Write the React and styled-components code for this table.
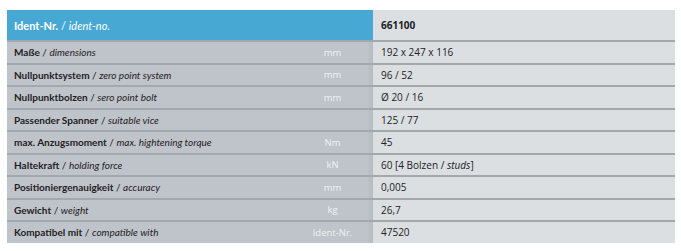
import React from 'react'
import styled, { createGlobalStyle } from 'styled-components'

const GlobalStyle = createGlobalStyle`
  body {
    margin: 0;
    background: #ffffff;
  }
`

const Table = styled.div`
  width: 668px;
  margin: 10px 0 0 7px;
  display: flex;
  flex-direction: column;
`

const Row = styled.div`
  display: grid;
  grid-template-columns: 285px 81px 302px;
  height: ${({ $head }) => ($head ? '30px' : '20.5px')};
  border-top: ${({ $head }) => ($head ? 'none' : '2px solid #a3a8ad')};
`

const Label = styled.div`
  display: flex;
  align-items: center;
  padding-left: 7px;
  background: ${({ $head }) => ($head ? '#47a8d4' : '#bfc4ca')};
  color: ${({ $head }) => ($head ? '#ffffff' : '#1f2023')};
  font-family: Lato, 'Liberation Sans', sans-serif;
  font-size: ${({ $head }) => ($head ? '11px' : '10px')};
  white-space: nowrap;

  b {
    font-weight: 700;
  }
  i {
    font-weight: 400;
    font-style: italic;
  }
`

const Unit = styled.div`
  display: flex;
  align-items: center;
  justify-content: center;
  background: ${({ $head }) =>
    $head
      ? '#47a8d4'
      : 'linear-gradient(to right, #bfc4ca calc(100% - 6px), #b6bbc1)'};
  color: #eff1f3;
  font-family: 'Open Sans', 'Liberation Sans', sans-serif;
  font-size: 9.5px;
`

const Value = styled.div`
  display: flex;
  align-items: center;
  padding-left: 8px;
  background: #dcdfe1;
  color: #202124;
  font-family: 'Open Sans', 'Liberation Sans', sans-serif;
  font-size: 10px;
  font-weight: ${({ $bold }) => ($bold ? 700 : 400)};
  white-space: nowrap;

  i {
    font-style: italic;
  }
`

const rows = [
  { de: 'Maße', en: 'dimensions', unit: 'mm', value: '192 x 247 x 116' },
  { de: 'Nullpunktsystem', en: 'zero point system', unit: 'mm', value: '96 / 52' },
  { de: 'Nullpunktbolzen', en: 'sero point bolt', unit: 'mm', value: 'Ø 20 / 16' },
  { de: 'Passender Spanner', en: 'suitable vice', unit: '', value: '125 / 77' },
  { de: 'max. Anzugsmoment', en: 'max. hightening torque', unit: 'Nm', value: '45' },
  {
    de: 'Haltekraft',
    en: 'holding force',
    unit: 'kN',
    value: (
      <>
        60 [4 Bolzen /&nbsp;<i>studs</i>]
      </>
    ),
  },
  { de: 'Positioniergenauigkeit', en: 'accuracy', unit: 'mm', value: '0,005' },
  { de: 'Gewicht', en: 'weight', unit: 'kg', value: '26,7' },
  { de: 'Kompatibel mit', en: 'compatible with', unit: 'Ident-Nr.', value: '47520' },
]

export default function App() {
  return (
    <>
      <GlobalStyle />
      <Table>
        <Row $head>
          <Label $head>
            <b>Ident-Nr.</b>&nbsp;/&nbsp;<i>ident-no.</i>
          </Label>
          <Unit $head />
          <Value $bold>661100</Value>
        </Row>
        {rows.map((r) => (
          <Row key={r.de}>
            <Label>
              <b>{r.de}</b>&nbsp;/&nbsp;<i>{r.en}</i>
            </Label>
            <Unit>{r.unit}</Unit>
            <Value>{r.value}</Value>
          </Row>
        ))}
      </Table>
    </>
  )
}
